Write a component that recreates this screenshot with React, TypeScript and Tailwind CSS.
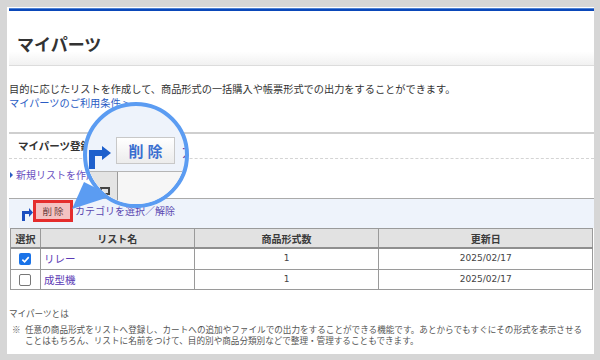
export default function App() {
  const rows = [
    { name: 'リレー', count: 1, date: '2025/02/17', checked: true },
    { name: '成型機', count: 1, date: '2025/02/17', checked: false },
  ];

  return (
    <div className="relative w-[600px] h-[360px] bg-[#d6d6d6] pt-[7px] pl-[7px] pr-[6px] pb-[6px] font-['Noto_Sans_CJK_JP','DejaVu_Sans',sans-serif] text-[#333] overflow-hidden">
      <div className="h-full bg-white pl-[2px]">
        <div className="pt-[1px]">
          <div className="h-[3px] bg-[#0a47b9] border-t border-[#4f83d6]" />
        </div>

        {/* page title */}
        <div className="h-[55px] pt-[11px] pl-[8px] flex items-center bg-linear-to-b from-white from-75% to-[#f1f1f1] border-b border-[#dcdcdc]">
          <h1 className="text-[17px] font-bold leading-none text-[#333]">マイパーツ</h1>
        </div>

        <div className="mt-[16px] text-[10.2px] leading-[14px]">
          <p>目的に応じたリストを作成して、商品形式の一括購入や帳票形式での出力をすることができます。</p>
          <p className="text-[#2a5cc4]">マイパーツのご利用条件 &gt;</p>
        </div>

        {/* register section */}
        <div className="mt-[22px] border-t-2 border-[#cfcfcf]">
          <div className="h-[25px] pl-[9px] flex items-center border-b border-dashed border-[#d4d4d4]">
            <span className="text-[10.5px] font-bold">マイパーツ登録</span>
          </div>
          <div className="mt-[9px] flex items-center leading-[14px] text-[10px] text-[#6a4fbf]">
            <span className="ml-[1px] mr-[3px] w-0 h-0 border-y-[3px] border-y-transparent border-l-[3px] border-l-[#2a5cc4]" />
            新規リストを作成
          </div>
        </div>

        {/* toolbar */}
        <div className="mt-[16px] h-[30px] border-t border-[#aaa] bg-[#eef3fb] flex items-start pl-[13px] pt-[1px]">
          <svg width="11" height="16" viewBox="0 0 11 16" className="mt-[7px]">
            <rect x="0" y="4" width="3" height="10" fill="#1c4fc0" />
            <rect x="0" y="4" width="7" height="3" fill="#1c4fc0" />
            <polygon points="7,1 7,10 11,5.5" fill="#1c4fc0" />
          </svg>
          <div className="w-[40px] h-[22px] border-[3px] border-[#e52d2d] bg-[#f4c2c2] flex items-center justify-center">
            <span className="text-[9.5px] tracking-[2px] text-[#6b3d3d] pl-[2px]">削除</span>
          </div>
          <span className="ml-[2px] mt-[4px] text-[10px] leading-[14px] text-[#5a47b0]">カテゴリを選択／解除</span>
        </div>

        {/* table */}
        <div className="ml-[1px] w-[583px] border-t border-l border-[#9a9a9a] text-[10px]">
          <div className="flex h-[20px] bg-[#e2e2e2] border-b-2 border-[#8f8f8f] font-bold text-[#3a3a3a]">
            <div className="w-[30px] border-r border-[#9a9a9a] flex items-center justify-center">選択</div>
            <div className="w-[154px] border-r border-[#9a9a9a] flex items-center justify-center">リスト名</div>
            <div className="w-[185px] border-r border-[#9a9a9a] flex items-center justify-center">商品形式数</div>
            <div className="w-[214px] border-r border-[#9a9a9a] flex items-center justify-center">更新日</div>
          </div>
          {rows.map((r, i) => (
            <div key={r.name} className={`flex ${i === 0 ? 'h-[21px]' : 'h-[20px]'} border-b border-[#9a9a9a]`}>
              <div className="w-[30px] border-r border-[#9a9a9a] flex items-center justify-center">
                {r.checked ? (
                  <span className="w-[12px] h-[12px] rounded-[2px] bg-[#1a73e8] flex items-center justify-center">
                    <svg width="9" height="9" viewBox="0 0 10 10">
                      <path d="M1.5 5.2 L4 7.6 L8.6 2.4" fill="none" stroke="white" strokeWidth="1.8" />
                    </svg>
                  </span>
                ) : (
                  <span className="w-[12px] h-[12px] rounded-[2px] border border-[#777] bg-white" />
                )}
              </div>
              <div className="w-[154px] border-r border-[#9a9a9a] flex items-center pl-[3px] text-[10.5px] text-[#5b3ab5]">
                {r.name}
              </div>
              <div className="w-[185px] border-r border-[#9a9a9a] flex items-center justify-center font-['DejaVu_Sans',sans-serif] text-[9px] text-[#444]">
                {r.count}
              </div>
              <div className="w-[214px] border-r border-[#9a9a9a] flex items-center justify-center font-['DejaVu_Sans',sans-serif] text-[9px] text-[#444]">
                {r.date}
              </div>
            </div>
          ))}
        </div>

        {/* footer note */}
        <div className="mt-[17px] text-[8.6px] text-[#555]">
          <p className="leading-[12px]">マイパーツとは</p>
          <div className="mt-[5px] flex leading-[11px]">
            <span className="w-[16px] pl-[3px]">※</span>
            <p>
              任意の商品形式をリストへ登録し、カートへの追加やファイルでの出力をすることができる機能です。あとからでもすぐにその形式を表示させる
              <br />
              ことはもちろん、リストに名前をつけて、目的別や商品分類別などで整理・管理することもできます。
            </p>
          </div>
        </div>
      </div>

      {/* magnifier tail */}
      <svg className="absolute left-0 top-0" width="600" height="360" viewBox="0 0 600 360">
        <polygon points="84,182 112,196 72,209" fill="#5b9cf2" />
      </svg>

      {/* magnifier */}
      <div className="absolute left-[83px] top-[102px] w-[106px] h-[106px] rounded-full border-[4px] border-[#5b9cf2] overflow-hidden bg-[#eef3fb]">
        <div className="absolute left-0 top-[65px] w-full h-[40px] border-t border-[#b5b5b5] bg-[#f6f6f6] flex">
          <div className="w-[31px] h-full bg-[#e4e4e4] border-r border-[#9a9a9a] relative">
            <span className="absolute left-[13px] top-[15px] w-[10px] h-[8px] border-2 border-[#444]" />
          </div>
        </div>
        <svg className="absolute left-[2px] top-[40px]" width="24" height="24" viewBox="0 0 24 24">
          <rect x="0" y="4" width="6" height="19" fill="#1d5fcc" />
          <rect x="0" y="4" width="14" height="6" fill="#1d5fcc" />
          <polygon points="13,0 13,14 22,7" fill="#1d5fcc" />
        </svg>
        <div className="absolute left-[29px] top-[31px] w-[59px] h-[27px] border border-[#c8c8c8] bg-linear-to-b from-white to-[#ececec] flex items-center justify-center">
          <span className="text-[15px] font-bold tracking-[4px] pl-[4px] text-[#3a6fd0] leading-none">削除</span>
        </div>
        <span className="absolute left-[94px] top-[37px] text-[15px] leading-none text-[#5a47b0]">カ</span>
      </div>
    </div>
  );
}
